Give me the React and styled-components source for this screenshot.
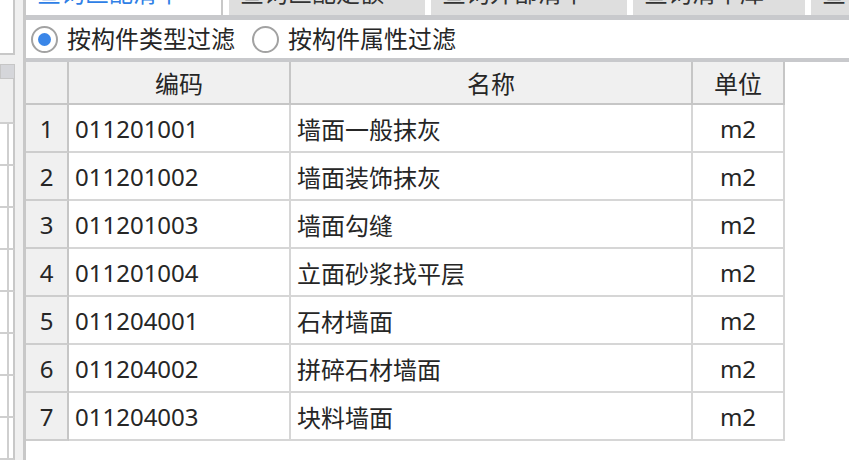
import React, { useState } from 'react'
import styled, { createGlobalStyle } from 'styled-components'

const GlobalStyle = createGlobalStyle`
  * { box-sizing: border-box; }
  body {
    margin: 0;
    background: #fff;
    overflow: hidden;
  }
`

const Frame = styled.div`
  display: flex;
  width: 849px;
  height: 460px;
  overflow: hidden;
  font-family: "Noto Sans", "Noto Sans CJK SC", sans-serif;
  font-size: 24px;
  color: #262626;
  background: #fff;
`

// the narrow strip of the neighbouring panel on the left
const LeftPane = styled.div`
  width: 23px;
  flex: none;
  display: flex;
  flex-direction: column;
  background: #f0f0f0;
`

const StubBox = styled.div`
  width: 15px;
  height: 74px;
  background: #fff;
  border-right: 2px solid #c8c8c8;
  border-bottom: 2px solid #c8c8c8;
`

const StubHeader = styled.div`
  width: 15px;
  height: 20px;
  margin-top: 9px;
  background: #d5d6da;
  border: 1px solid #c6c6c6;
`

const StubCell = styled.div`
  width: 15px;
  height: ${p => p.$first ? 45 : 42}px;
  flex: none;
  border-right: 2px solid #c8c8c8;
  border-bottom: 2px solid #cfcfcf;
  background: ${p => p.$first
    ? '#efefef'
    : 'linear-gradient(to right, #fff 0 7px, #cfcfcf 7px 9px, #fff 9px)'};
`

const Divider = styled.div`
  width: 3px;
  flex: none;
  background: #c8c8c8;
`

const Main = styled.div`
  flex: 1;
  min-width: 0;
  display: flex;
  flex-direction: column;
`

const TabBar = styled.div`
  height: 15px;
  flex: none;
  display: flex;
  gap: 6px;
  overflow: hidden;
  background: #fff;
`

const Tab = styled.div`
  width: ${p => p.$w}px;
  height: 15px;
  flex: none;
  display: flex;
  align-items: flex-end;
  gap: 14px;
  padding: 0 0 10px 11px;
  overflow: hidden;
  white-space: nowrap;
  line-height: 24px;
  background: ${p => p.$active ? '#fff' : '#dedede'};
  color: ${p => p.$active ? '#2f7fe6' : '#333'};
  border-right: ${p => p.$active ? '2px solid #c8c8c8' : 'none'};
`

const TabClose = styled.span`
  font-size: 16px;
  line-height: 24px;
  color: ${p => p.$active ? '#9cc0ee' : '#bdbdbd'};
`

const Band = styled.div`
  height: ${p => p.$h}px;
  flex: none;
  background: #c8c9cc;
`

const RadioRow = styled.div`
  height: 38px;
  flex: none;
  display: flex;
  align-items: center;
  padding-left: 5px;
  background: #fff;
`

const RadioItem = styled.label`
  display: flex;
  align-items: center;
  gap: 9px;
  margin-right: 17px;
  cursor: pointer;
  line-height: 24px;
  white-space: nowrap;
`

const RadioDot = styled.span`
  position: relative;
  width: 27px;
  height: 27px;
  flex: none;
  border-radius: 50%;
  border: 2px solid #a2a2a2;
  background: #fff;

  &::after {
    content: '';
    display: ${p => p.$checked ? 'block' : 'none'};
    position: absolute;
    left: 5px;
    top: 5px;
    width: 13px;
    height: 13px;
    border-radius: 50%;
    background: #3a86e8;
  }
`

const TableArea = styled.div`
  flex: 1;
  background: #fff;
`

const Grid = styled.div`
  display: grid;
  grid-template-columns: 43px 222px 402px 92px;
  width: 759px;
`

const HeadCell = styled.div`
  height: 43px;
  display: flex;
  align-items: center;
  justify-content: center;
  background: #f0f0f0;
  border-right: 2px solid #c6c6c6;
  border-bottom: 2px solid #c6c6c6;
`

const NumCell = styled.div`
  height: 48px;
  display: flex;
  align-items: center;
  justify-content: center;
  background: #f0f0f0;
  border-right: 2px solid #c6c6c6;
  border-bottom: 2px solid #cdcdcd;
`

const Cell = styled.div`
  height: 48px;
  display: flex;
  align-items: center;
  justify-content: ${p => p.$center ? 'center' : 'flex-start'};
  padding-left: ${p => p.$center ? 0 : 6}px;
  background: #fff;
  border-right: 2px solid #d6d6d6;
  border-bottom: 2px solid #d6d6d6;
  white-space: nowrap;
`

const tabs = [
  { label: '查询匹配清单', w: 197 },
  { label: '查询匹配定额', w: 196 },
  { label: '查询外部清单', w: 196 },
  { label: '查询清单库', w: 172 },
  { label: '查询定额库', w: 196 },
]

const rows = [
  ['011201001', '墙面一般抹灰', 'm2'],
  ['011201002', '墙面装饰抹灰', 'm2'],
  ['011201003', '墙面勾缝', 'm2'],
  ['011201004', '立面砂浆找平层', 'm2'],
  ['011204001', '石材墙面', 'm2'],
  ['011204002', '拼碎石材墙面', 'm2'],
  ['011204003', '块料墙面', 'm2'],
]

export default function App() {
  const [filter, setFilter] = useState('type')

  return (
    <>
      <GlobalStyle />
      <Frame>
        <LeftPane>
          <StubBox />
          <StubHeader />
          <StubCell $first />
          {Array.from({ length: 8 }).map((_, i) => <StubCell key={i} />)}
        </LeftPane>
        <Divider />
        <Main>
          <TabBar>
            {tabs.map((t, i) => (
              <Tab key={t.label} $w={t.w} $active={i === 0}>
                <span>{t.label}</span>
                <TabClose $active={i === 0}>×</TabClose>
              </Tab>
            ))}
          </TabBar>
          <Band $h={5} />
          <RadioRow>
            <RadioItem onClick={() => setFilter('type')}>
              <RadioDot $checked={filter === 'type'} />
              按构件类型过滤
            </RadioItem>
            <RadioItem onClick={() => setFilter('attr')}>
              <RadioDot $checked={filter === 'attr'} />
              按构件属性过滤
            </RadioItem>
          </RadioRow>
          <Band $h={4} />
          <TableArea>
            <Grid>
              <HeadCell />
              <HeadCell>编码</HeadCell>
              <HeadCell>名称</HeadCell>
              <HeadCell>单位</HeadCell>
              {rows.map((r, i) => (
                <React.Fragment key={r[0]}>
                  <NumCell>{i + 1}</NumCell>
                  <Cell>{r[0]}</Cell>
                  <Cell>{r[1]}</Cell>
                  <Cell $center>{r[2]}</Cell>
                </React.Fragment>
              ))}
            </Grid>
          </TableArea>
        </Main>
      </Frame>
    </>
  )
}
